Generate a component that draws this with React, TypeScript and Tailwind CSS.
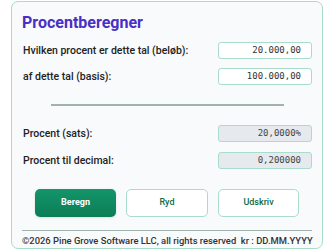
export default function App() {
  const inputs = [
    { label: "Hvilken procent er dette tal (beløb):", value: "20.000,00" },
    { label: "af dette tal (basis):", value: "100.000,00" },
  ];
  const results = [
    { label: "Procent (sats):", value: "20,0000%" },
    { label: "Procent til decimal:", value: "0,200000" },
  ];

  return (
    <div className="bg-white min-h-screen pl-[11px] pt-[1px]" style={{ fontFamily: "Roboto, 'Liberation Sans', sans-serif" }}>
      <div className="w-[312px] h-[248px] rounded-[7px] border border-[#a9dcca] bg-[#f8fafc] px-[10px] pt-[10px] flex flex-col">
        <h1 className="text-[16px] leading-[22px] font-bold text-[#4a2fc4]">Procentberegner</h1>

        <div className="mt-[8px] flex flex-col gap-[9px]">
          {inputs.map((row) => (
            <div key={row.label} className="flex items-center justify-between">
              <span className="text-[10.5px] font-medium text-[#222] pl-[1px]">{row.label}</span>
              <div
                className="w-[94px] h-[17px] rounded-[3px] border border-[#a9dcca] bg-white flex items-center justify-end pr-[10px] text-[9px] text-[#333]"
                style={{ fontFamily: "'DejaVu Sans Mono', monospace" }}
              >
                {row.value}
              </div>
            </div>
          ))}
        </div>

        <div className="mt-[19px] mx-auto w-[233px] h-[2px] bg-[#9fb3ad]" />

        <div className="mt-[19px] flex flex-col gap-[10px]">
          {results.map((row) => (
            <div key={row.label} className="flex items-center justify-between">
              <span className="text-[10.5px] font-medium text-[#222] pl-[1px]">{row.label}</span>
              <div
                className="w-[94px] h-[17px] rounded-[3px] border border-[#a9dcca] bg-[#e6eaee] flex items-center justify-end pr-[10px] text-[9px] text-[#444]"
                style={{ fontFamily: "'DejaVu Sans Mono', monospace" }}
              >
                {row.value}
              </div>
            </div>
          ))}
        </div>

        <div className="mt-[20px] flex justify-center gap-[10px]">
          <button className="w-[81px] h-[28px] rounded-[5px] bg-gradient-to-b from-[#14956a] to-[#0b7d56] text-white text-[9px] font-bold shadow-sm">
            Beregn
          </button>
          <button className="w-[82px] h-[28px] rounded-[5px] border border-[#a9dcca] bg-white text-[#0f6b4a] text-[9px] font-medium">
            Ryd
          </button>
          <button className="w-[81px] h-[28px] rounded-[5px] border border-[#a9dcca] bg-white text-[#0f6b4a] text-[9px] font-medium">
            Udskriv
          </button>
        </div>

        <div className="mt-[13px] h-px bg-[#9fb3ad]" />
        <div className="mt-[3px] text-[9.4px] font-medium text-[#333] whitespace-nowrap">
          ©2026 Pine Grove Software LLC, all rights reserved&nbsp; kr : DD.MM.YYYY
        </div>
      </div>
    </div>
  );
}
